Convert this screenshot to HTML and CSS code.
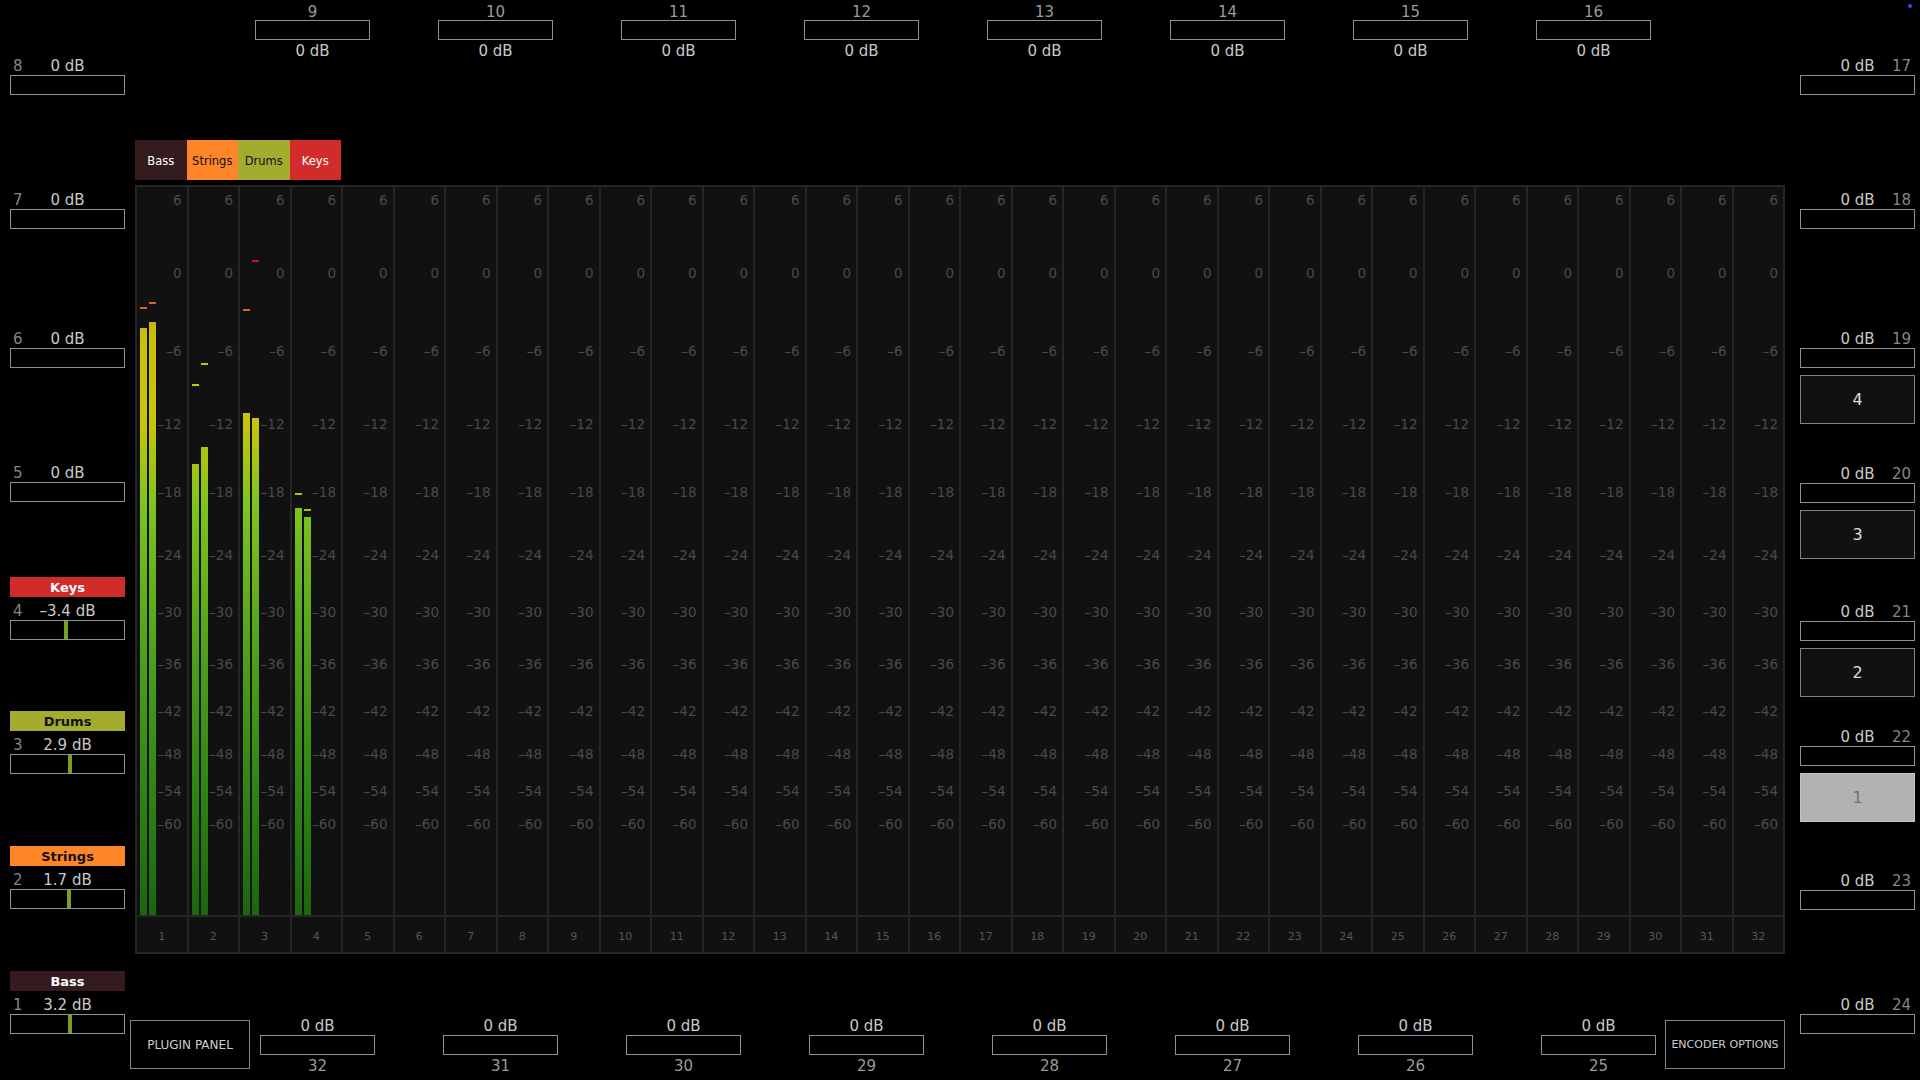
FILE: index.html
```html
<!DOCTYPE html>
<html lang="en">
    <head>
        <meta charset="UTF-8" />
        <meta name="viewport" content="width=device-width, initial-scale=1.0" />
        <title>Mixer</title>
        <link rel="stylesheet" href="styles.css">
    </head>
    <body>
        <span class="status-dot"></span>

        <!-- левая колонка: фейдеры 8..1 -->
        <div class="side side-left">
            <div class="cell">
                <div class="fader-head"><span class="fader-num">8</span><span class="fader-val">0 dB</span></div>
                <div class="fader-box"></div>
            </div>
            <div class="cell">
                <div class="fader-head"><span class="fader-num">7</span><span class="fader-val">0 dB</span></div>
                <div class="fader-box"></div>
            </div>
            <div class="cell">
                <div class="fader-head"><span class="fader-num">6</span><span class="fader-val">0 dB</span></div>
                <div class="fader-box"></div>
            </div>
            <div class="cell">
                <div class="fader-head"><span class="fader-num">5</span><span class="fader-val">0 dB</span></div>
                <div class="fader-box"></div>
            </div>
            <div class="cell">
                <div class="ch-label keys">Keys</div>
                <div class="fader-head"><span class="fader-num">4</span><span class="fader-val">–3.4 dB</span></div>
                <div class="fader-box"><span class="knob" style="left: 53px"></span></div>
            </div>
            <div class="cell">
                <div class="ch-label drums">Drums</div>
                <div class="fader-head"><span class="fader-num">3</span><span class="fader-val">2.9 dB</span></div>
                <div class="fader-box"><span class="knob" style="left: 57px"></span></div>
            </div>
            <div class="cell">
                <div class="ch-label strings">Strings</div>
                <div class="fader-head"><span class="fader-num">2</span><span class="fader-val">1.7 dB</span></div>
                <div class="fader-box"><span class="knob" style="left: 56px"></span></div>
            </div>
            <div class="cell">
                <div class="ch-label bass">Bass</div>
                <div class="fader-head"><span class="fader-num">1</span><span class="fader-val">3.2 dB</span></div>
                <div class="fader-box"><span class="knob" style="left: 57px"></span></div>
            </div>
        </div>

        <!-- центр -->
        <div class="main">
            <div class="top-row">
                <div class="tfader"><div class="t-num">9</div><div class="fader-box"></div><div class="t-val">0 dB</div></div>
                <div class="tfader"><div class="t-num">10</div><div class="fader-box"></div><div class="t-val">0 dB</div></div>
                <div class="tfader"><div class="t-num">11</div><div class="fader-box"></div><div class="t-val">0 dB</div></div>
                <div class="tfader"><div class="t-num">12</div><div class="fader-box"></div><div class="t-val">0 dB</div></div>
                <div class="tfader"><div class="t-num">13</div><div class="fader-box"></div><div class="t-val">0 dB</div></div>
                <div class="tfader"><div class="t-num">14</div><div class="fader-box"></div><div class="t-val">0 dB</div></div>
                <div class="tfader"><div class="t-num">15</div><div class="fader-box"></div><div class="t-val">0 dB</div></div>
                <div class="tfader"><div class="t-num">16</div><div class="fader-box"></div><div class="t-val">0 dB</div></div>
            </div>

            <div class="tabs">
                <div class="tab bass">Bass</div>
                <div class="tab strings">Strings</div>
                <div class="tab drums">Drums</div>
                <div class="tab keys">Keys</div>
            </div>

            <div class="meter" id="meter"></div>

            <div class="bottom-row">
                <div class="btn">PLUGIN PANEL</div>
                <div class="bfaders">
                    <div class="bfader"><div class="b-val">0 dB</div><div class="fader-box"></div><div class="b-num">32</div></div>
                    <div class="bfader"><div class="b-val">0 dB</div><div class="fader-box"></div><div class="b-num">31</div></div>
                    <div class="bfader"><div class="b-val">0 dB</div><div class="fader-box"></div><div class="b-num">30</div></div>
                    <div class="bfader"><div class="b-val">0 dB</div><div class="fader-box"></div><div class="b-num">29</div></div>
                    <div class="bfader"><div class="b-val">0 dB</div><div class="fader-box"></div><div class="b-num">28</div></div>
                    <div class="bfader"><div class="b-val">0 dB</div><div class="fader-box"></div><div class="b-num">27</div></div>
                    <div class="bfader"><div class="b-val">0 dB</div><div class="fader-box"></div><div class="b-num">26</div></div>
                    <div class="bfader"><div class="b-val">0 dB</div><div class="fader-box"></div><div class="b-num">25</div></div>
                </div>
                <div class="btn encoder">ENCODER OPTIONS</div>
            </div>
        </div>

        <!-- правая колонка: фейдеры 17..24 и выбор банка -->
        <div class="side side-right">
            <div class="cell">
                <div class="fader-head"><span class="fader-num">17</span><span class="fader-val">0 dB</span></div>
                <div class="fader-box"></div>
            </div>
            <div class="cell">
                <div class="fader-head"><span class="fader-num">18</span><span class="fader-val">0 dB</span></div>
                <div class="fader-box"></div>
            </div>
            <div class="cell">
                <div class="fader-head"><span class="fader-num">19</span><span class="fader-val">0 dB</span></div>
                <div class="fader-box"></div>
                <div class="bank">4</div>
            </div>
            <div class="cell">
                <div class="fader-head"><span class="fader-num">20</span><span class="fader-val">0 dB</span></div>
                <div class="fader-box"></div>
                <div class="bank">3</div>
            </div>
            <div class="cell">
                <div class="fader-head"><span class="fader-num">21</span><span class="fader-val">0 dB</span></div>
                <div class="fader-box"></div>
                <div class="bank">2</div>
            </div>
            <div class="cell">
                <div class="fader-head"><span class="fader-num">22</span><span class="fader-val">0 dB</span></div>
                <div class="fader-box"></div>
                <div class="bank active">1</div>
            </div>
            <div class="cell">
                <div class="fader-head"><span class="fader-num">23</span><span class="fader-val">0 dB</span></div>
                <div class="fader-box"></div>
            </div>
            <div class="cell">
                <div class="fader-head"><span class="fader-num">24</span><span class="fader-val">0 dB</span></div>
                <div class="fader-box"></div>
            </div>
        </div>

        <script>
            // шкала: подпись и центр по высоте (px от верха трека)
            const ticks = [
                ['6', 13], ['0', 86], ['–6', 164], ['–12', 237],
                ['–18', 305], ['–24', 368], ['–30', 425], ['–36', 477],
                ['–42', 524], ['–48', 567], ['–54', 604], ['–60', 637],
            ]

            // уровни: [высота столбика, верх пика, цвет пика] для L и R
            const levels = [
                [[587, 120, '#d2652a'], [593, 115, '#d2652a']],
                [[451, 197, '#c8c40c'], [468, 176, '#c8c40c']],
                [[502, 122, '#d2652a'], [497, 73, '#cc1111']],
                [[407, 306, '#9cc41a'], [398, 322, '#9cc41a']],
            ]

            const meter = document.getElementById('meter')

            for (let i = 1; i <= 32; i++) {
                const col = document.createElement('div')
                col.className = 'col'

                const track = document.createElement('div')
                track.className = 'track'

                ticks.forEach(function ([label, y]) {
                    const t = document.createElement('span')
                    t.className = 'tick'
                    t.textContent = label
                    t.style.top = y - 8 + 'px'
                    track.appendChild(t)
                })

                const lv = levels[i - 1]
                if (lv) {
                    lv.forEach(function ([h, peak, color], side) {
                        const bar = document.createElement('span')
                        bar.className = 'bar ' + (side ? 'r' : 'l')
                        bar.style.height = h + 'px'
                        track.appendChild(bar)

                        const p = document.createElement('span')
                        p.className = 'peak ' + (side ? 'r' : 'l')
                        p.style.top = peak + 'px'
                        p.style.background = color
                        track.appendChild(p)
                    })
                }

                const num = document.createElement('div')
                num.className = 'col-num'
                num.textContent = i

                col.appendChild(track)
                col.appendChild(num)
                meter.appendChild(col)
            }
        </script>
    </body>
</html>
```

FILE: styles.css
```css
body {
    margin: 0;
    width: 1920px;
    height: 1080px;
    overflow: hidden;
    background-color: #000;
    display: flex;
    position: relative;
    font-family: 'DejaVu Sans', sans-serif;
    color: #c8c8c8;
}
.status-dot {
    position: absolute;
    top: 4px;
    right: 8px;
    width: 4px;
    height: 4px;
    border-radius: 50%;
    background-color: #3a46ff;
}

/* боковые колонки */
.side {
    flex: none;
    display: flex;
    flex-direction: column;
    box-sizing: border-box;
}
.side-left {
    width: 130px;
    padding: 0 5px 0 10px;
}
.side-right {
    width: 135px;
    padding: 0 5px 0 15px;
}
.cell {
    flex: none;
    height: 134px;
    display: flex;
    flex-direction: column;
    justify-content: flex-end;
}
.side-left .cell:nth-child(1) { height: 95px; }
.side-left .cell:nth-child(3) { height: 139px; }
.side-left .cell:nth-child(5) { height: 138px; }
.side-left .cell:nth-child(7) { height: 135px; }
.side-left .cell:nth-child(8) { height: 125px; }

.side-right .cell:nth-child(1) { height: 95px; }
.side-right .cell:nth-child(3) { height: 195px; }
.side-right .cell:nth-child(4) { height: 135px; }
.side-right .cell:nth-child(5) { height: 138px; }
.side-right .cell:nth-child(6) { height: 125px; }
.side-right .cell:nth-child(7) { height: 88px; }
.side-right .cell:nth-child(8) { height: 124px; }

.fader-head {
    display: grid;
    height: 19px;
    line-height: 21px;
    font-size: 15px;
}
.fader-head > span {
    grid-area: 1 / 1;
}
.fader-num {
    justify-self: start;
    padding-left: 3px;
    color: #858585;
}
.side-right .fader-num {
    justify-self: end;
    padding-left: 0;
    padding-right: 4px;
}
.fader-val {
    justify-self: center;
}
.fader-box {
    height: 20px;
    border: 1px solid #8a9296;
    box-sizing: border-box;
    position: relative;
}
.knob {
    position: absolute;
    top: 0;
    bottom: 0;
    width: 4px;
    background-color: #79a020;
}

.ch-label {
    height: 20px;
    line-height: 22px;
    margin-bottom: 4px;
    text-align: center;
    font-size: 13px;
    font-weight: bold;
}
.keys { background-color: #d22b2b; color: #fff; }
.drums { background-color: #a4ac30; color: #111; }
.strings { background-color: #fe8628; color: #111; }
.bass { background-color: #341c1e; color: #fff; }

.bank {
    height: 49px;
    margin-top: 7px;
    border: 1px solid #7d8589;
    box-sizing: border-box;
    background-color: #111;
    display: flex;
    align-items: center;
    justify-content: center;
    font-size: 16px;
    color: #ddd;
}
.bank.active {
    background-color: #b2b2b2;
    border-color: #c4c4c4;
    color: #707070;
}

/* центральная часть */
.main {
    flex: none;
    width: 1655px;
    display: flex;
    flex-direction: column;
}
.top-row {
    display: flex;
    gap: 68px;
    height: 140px;
    padding-left: 125px;
}
.tfader {
    width: 115px;
    padding-top: 2px;
    text-align: center;
    font-size: 15px;
}
.t-num {
    height: 18px;
    line-height: 20px;
    color: #9a9a9a;
}
.t-val {
    line-height: 18px;
    margin-top: 2px;
}

.tabs {
    display: flex;
    height: 40px;
    margin-left: 5px;
}
.tab {
    width: 51.5px;
    height: 40px;
    line-height: 42px;
    text-align: center;
    font-size: 11.5px;
}

.meter {
    margin: 5px 0 0 5px;
    width: 1650px;
    height: 769px;
    box-sizing: border-box;
    padding: 2px;
    display: grid;
    grid-template-columns: repeat(32, 1fr);
    gap: 2px;
    background-color: #262626;
}
.col {
    display: flex;
    flex-direction: column;
    background-color: #111;
    min-width: 0;
}
.track {
    position: relative;
    flex: 1;
}
.col-num {
    height: 35px;
    border-top: 2px solid #262626;
    line-height: 40px;
    text-align: center;
    font-size: 11px;
    color: #555;
    overflow: hidden;
}
.tick {
    position: absolute;
    right: 5px;
    font-size: 13.5px;
    line-height: 16px;
    color: #4a4a4a;
}
.bar {
    position: absolute;
    bottom: 0;
    width: 7px;
    background-image: linear-gradient(
        to bottom,
        #d01a10 0,
        #d01a10 84px,
        #d8641e 90px,
        #cfa214 125px,
        #c9c00c 150px,
        #c8c40c 235px,
        #7dc320 320px,
        #4e9f1a 470px,
        #2f8514 600px,
        #1b660e 728px
    );
    background-size: 7px 728px;
    background-position: bottom;
}
.bar.l, .peak.l { left: 3px; }
.bar.r, .peak.r { left: 12px; }
.peak {
    position: absolute;
    width: 7px;
    height: 2px;
}

.bottom-row {
    display: flex;
    align-items: flex-start;
    padding-top: 62px;
}
.btn {
    flex: none;
    width: 120px;
    height: 49px;
    margin-top: 4px;
    border: 1px solid #7d8589;
    box-sizing: border-box;
    display: flex;
    align-items: center;
    justify-content: center;
    font-size: 12px;
    color: #ccc;
}
.btn.encoder {
    margin-left: 9px;
    font-size: 11px;
}
.bfaders {
    display: flex;
    gap: 68px;
    margin-left: 10px;
}
.bfader {
    width: 115px;
    text-align: center;
    font-size: 15px;
}
.b-val {
    height: 18px;
    line-height: 20px;
}
.bfader .fader-box {
    margin-top: 1px;
}
.b-num {
    line-height: 18px;
    margin-top: 2px;
    color: #9a9a9a;
}
```
